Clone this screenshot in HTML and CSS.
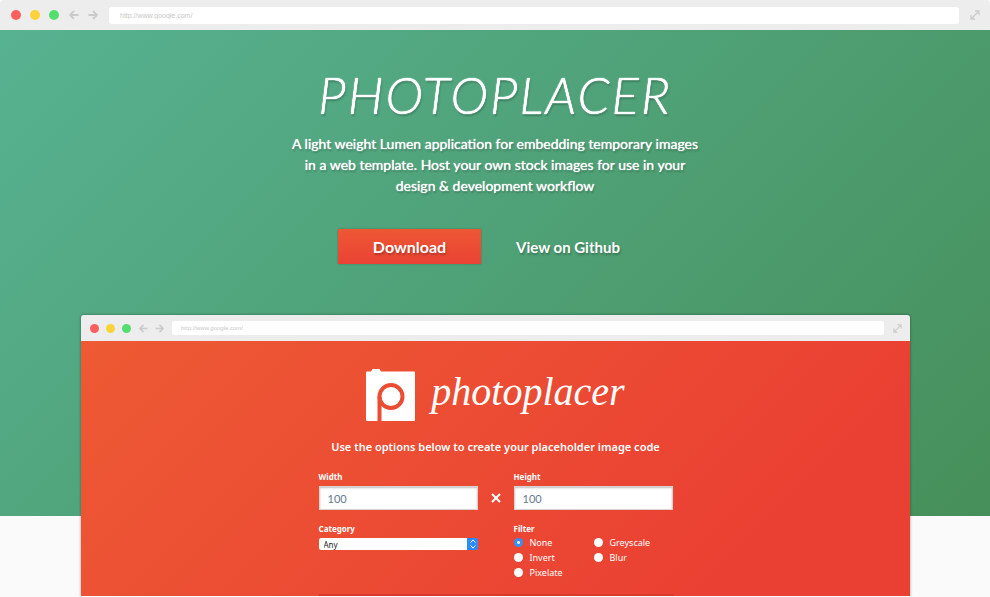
FILE: index.html
```html
<!DOCTYPE html>
<html lang="en">
<head>
<meta charset="utf-8">
<meta name="viewport" content="width=device-width, initial-scale=1">
<title>Photoplacer</title>
<link rel="stylesheet" href="styles.css">
</head>
<body>
<svg class="sprite" aria-hidden="true">
  <symbol id="arrow" viewBox="0 0 10 10"><path d="M9.500 5H1M5 1 1 5l4 4" fill="none" stroke="currentColor" stroke-width="1.8"/></symbol>
  <symbol id="expand" viewBox="0 0 10 10"><path d="M2 8 8 2M5 1h4v4M1 5v4h4" fill="none" stroke="currentColor" stroke-width="1.3"/></symbol>
</svg>
<header class="bar">
  <div class="dots"><i class="red"></i><i class="yellow"></i><i class="green"></i></div>
  <div class="nav"><svg><use href="#arrow"/></svg><svg class="forward"><use href="#arrow"/></svg></div>
  <input class="address" type="text" aria-label="Address" value="http://www.google.com/">
  <svg class="expand"><use href="#expand"/></svg>
</header>
<main>
  <section class="hero">
    <h1>PHOTOPLACER</h1>
    <p>A light weight Lumen application for embedding temporary images<br>in a web template. Host your own stock images for use in your<br>design &amp; development workflow</p>
    <div class="actions">
      <a class="download" href="#download">Download</a>
      <a class="github" href="#github">View on Github</a>
    </div>
  </section>
  <section class="window">
    <header class="bar small">
      <div class="dots"><i class="red"></i><i class="yellow"></i><i class="green"></i></div>
      <div class="nav"><svg><use href="#arrow"/></svg><svg class="forward"><use href="#arrow"/></svg></div>
      <input class="address" type="text" aria-label="Preview address" value="http://www.google.com/">
      <svg class="expand"><use href="#expand"/></svg>
    </header>
    <div class="app">
      <div class="brand">
        <svg class="mark" viewBox="0 0 50 52" aria-hidden="true">
          <path d="M1 2.500h4L6.500 0h7L15 2.500h33q1 0 1 1V51q0 1-1 1H1q-1 0-1-1V3.500q0-1 1-1z" fill="#fff"/>
          <circle cx="25" cy="27.500" r="11.500" fill="#fff" stroke="#eb4d33" stroke-width="4"/>
          <path d="M13.500 27.500V52" stroke="#eb4d33" stroke-width="4"/>
        </svg>
        <span class="wordmark">photoplacer</span>
      </div>
      <h2>Use the options below to create your placeholder image code</h2>
      <form>
        <div class="field">
          <label for="width">Width</label>
          <input id="width" type="text" value="100">
        </div>
        <svg class="times" viewBox="0 0 10 10" aria-hidden="true"><path d="m1 1 8 8M9 1 1 9" stroke="#fff" stroke-width="2"/></svg>
        <div class="field">
          <label for="height">Height</label>
          <input id="height" type="text" value="100">
        </div>
        <div class="field category">
          <label for="category">Category</label>
          <div class="select">
            <select id="category"><option>Any</option></select>
            <svg viewBox="0 0 10 12" aria-hidden="true"><path d="m2.500 4.500 2.500-2.500 2.500 2.500M2.500 7.500l2.500 2.500 2.500-2.500" fill="none" stroke="#fff"/></svg>
          </div>
        </div>
        <fieldset>
          <legend>Filter</legend>
          <div class="options">
            <label><input type="radio" name="filter" checked>None</label>
            <label><input type="radio" name="filter">Greyscale</label>
            <label><input type="radio" name="filter">Invert</label>
            <label><input type="radio" name="filter">Blur</label>
            <label><input type="radio" name="filter">Pixelate</label>
          </div>
        </fieldset>
      </form>
    </div>
  </section>
</main>
</body>
</html>
```
FILE: styles.css
```css
* { box-sizing: border-box; }
body { margin: 0; background: #fafafa; font-family: Lato, sans-serif; color: #fff; }
.sprite { display: none; }

.bar {
  display: flex;
  align-items: center;
  height: 30px;
  padding: 0 10px 0 11px;
  background: #ededed;
  border-radius: 4px 4px 0 0;
  color: #cbcbcb;
}
.dots { display: flex; gap: 9px; }
.dots i { width: 10px; height: 10px; border-radius: 50%; }
.red { background: #fc605c; }
.yellow { background: #fcd33b; }
.green { background: #55de70; }
.nav { display: flex; gap: 9px; margin: 0 11px 0 10px; }
.nav svg { width: 10px; height: 10px; }
.forward { transform: scaleX(-1); }
.address {
  flex: 1;
  min-width: 0;
  height: 17px;
  padding: 0 11px;
  border: 0;
  border-radius: 3px;
  background: #fff;
  color: #c8c8c8;
  font: 7px "Liberation Sans", sans-serif;
}
.expand { width: 10px; height: 10px; margin-left: 11px; }

.hero {
  display: flex;
  flex-direction: column;
  align-items: center;
  height: 486px;
  padding-top: 34px;
  background: linear-gradient(135deg, #57b291, #468f5a);
  text-align: center;
  text-shadow: 0 0 1px #fff, 1px 2px 2px rgba(0, 0, 0, .25);
}
h1 {
  margin: 0;
  font-size: 51px;
  line-height: 61px;
  font-weight: 300;
  font-style: italic;
  letter-spacing: 2px;
  text-shadow: 0 0 1px #fff, 0 0 1px #fff, 1px 2px 2px rgba(0, 0, 0, .25);
}
.hero p { margin: 8px 0 33px; font-size: 14px; line-height: 21px; font-weight: 400; }
.actions { display: flex; align-items: center; gap: 35px; font-size: 15px; font-weight: 700; margin-right: 32px; text-shadow: 1px 2px 2px rgba(0, 0, 0, .25); }
.actions a { color: #fff; text-decoration: none; }
.download {
  width: 143px;
  line-height: 35px;
  background: linear-gradient(#ed5733, #ea4335);
  box-shadow: 0 0 2px rgba(0, 0, 0, .25);
  font-size: 16px;
}

.window {
  position: relative;
  margin: -201px 80px 0 81px;
  border-radius: 3px 3px 0 0;
  box-shadow: 0 0 3px rgba(0, 0, 0, .4);
}
.small { height: 26px; padding: 0 8px 0 9px; border-radius: 3px 3px 0 0; }
.small .dots { gap: 7px; }
.small .dots i { width: 9px; height: 9px; }
.small .nav { gap: 7px; margin: 0 8px; }
.small .nav svg { width: 9px; height: 9px; }
.small .address { height: 14px; padding: 0 9px; font-size: 6px; }
.small .expand { width: 9px; height: 9px; margin-left: 9px; }

.app { padding-top: 28px; background: linear-gradient(135deg, #ed5a33, #ea4033 80%); font-family: "Noto Sans", sans-serif; }
.brand { display: flex; justify-content: center; gap: 15px; height: 52px; }
.mark { width: 50px; height: 52px; }
.wordmark { font: italic 40px/46px "Liberation Serif", serif; }
h2 { margin: 17px 0 14px; font-size: 11px; line-height: 18px; font-weight: 600; text-align: center; }
form {
  display: grid;
  grid-template-columns: 159px 36px 159px;
  width: 354px;
  margin: 0 auto;
  border-bottom: 2px solid #d93a2f;
  font-size: 9px;
}
.field label, legend { display: block; padding: 0; line-height: 14px; font-size: 8px; font-weight: 700; }
.field > input {
  width: 100%;
  height: 24px;
  margin-top: 2px;
  padding: 0 8px;
  border: 1px solid #d8d2d0;
  background: #fff;
  box-shadow: inset 0 1px 2px rgba(0, 0, 0, .25);
  color: #65798c;
  font: 11px Lato, sans-serif;
}
.times { width: 10px; height: 10px; align-self: end; justify-self: center; margin-bottom: 7px; }
.category { grid-column: 1 / 3; width: 159px; }
.category, fieldset { margin: 12px 0 0; }
.select { position: relative; margin-top: 2px; }
select {
  display: block;
  width: 100%;
  height: 12px;
  padding: 0 5px;
  appearance: none;
  border: 0;
  border-radius: 2px;
  background: linear-gradient(90deg, #fff 148px, #2d8bf8 148px);
  color: #222;
  font: 8px "Noto Sans", sans-serif;
}
.select svg { position: absolute; right: 0; top: 0; width: 10px; height: 12px; pointer-events: none; }
fieldset { min-width: 0; padding: 0 0 14px; border: 0; }
legend { line-height: 13px; }
.options { display: grid; grid-template-columns: 80px 1fr; line-height: 15px; }
.options label { display: flex; align-items: center; gap: 7px; }
.options input { appearance: none; width: 9px; height: 9px; margin: 0; border-radius: 50%; background: #fff; }
.options input:checked { background: radial-gradient(circle, #fff 1px, #3290f8 2px); }
```
